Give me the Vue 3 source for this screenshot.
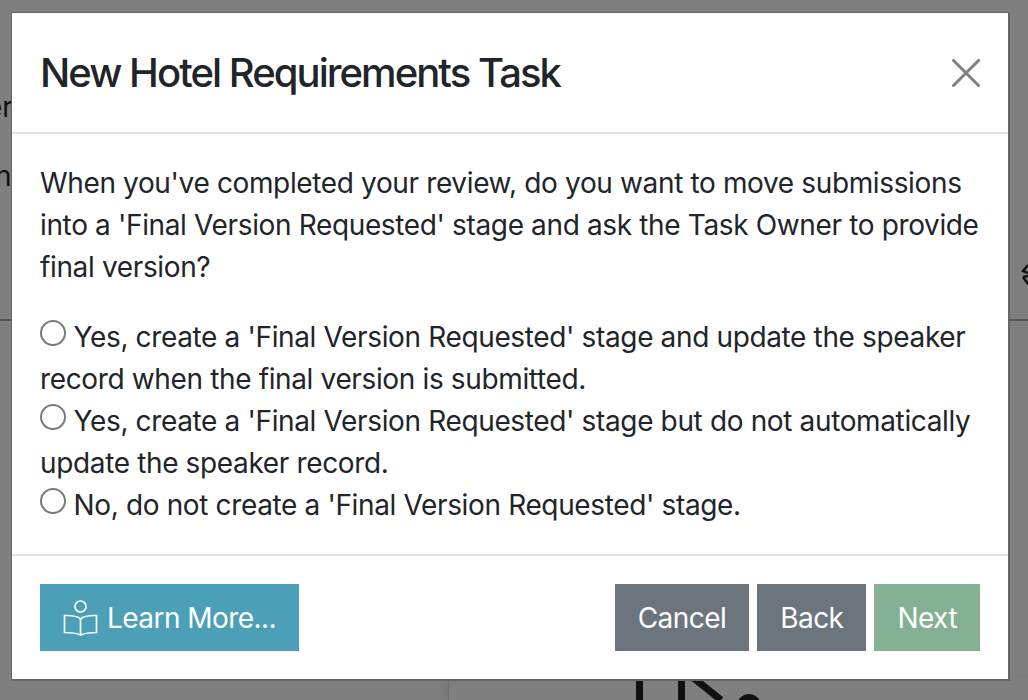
<template>
  <div class="page">
    <!-- dimmed page behind the modal -->
    <div class="backdrop">
      <span class="bg-text bg-er">er</span>
      <span class="bg-text bg-h">h</span>
      <svg class="bg-chevrons" width="8" height="24" viewBox="0 0 8 24" fill="none" stroke="#111" stroke-width="2.500">
        <path d="M7 1L2 7L7 9" />
        <path d="M2 13L7 20" />
        <path d="M2 13L7 12" />
      </svg>
      <div class="bg-line"></div>
      <div class="bg-card">
        <svg class="bg-icon" width="140" height="22" viewBox="0 0 140 22" fill="none" stroke="#111" stroke-width="7">
          <path d="M3.500 0V22" />
          <path d="M45.500 0V22" />
          <path d="M55 -2L85 22" />
          <circle cx="113" cy="28" r="12" fill="#111" stroke="none" />
        </svg>
      </div>
    </div>

    <div class="modal">
      <header class="modal-header">
        <h5 class="modal-title">New Hotel Requirements Task</h5>
        <button class="close" aria-label="Close">
          <svg width="28" height="28" viewBox="0 0 28 28" fill="none" stroke="#808080" stroke-width="3" stroke-linecap="round">
            <path d="M1.500 1.500L26.500 26.500M26.500 1.500L1.500 26.500" />
          </svg>
        </button>
      </header>

      <div class="modal-body">
        <p class="question">
          When you've completed your review, do you want to move submissions into a 'Final Version Requested' stage and ask the Task Owner to provide final version?
        </p>
        <div class="options">
          <div v-for="opt in options" :key="opt" class="option">
            <span class="radio"></span> {{ opt }}
          </div>
        </div>
      </div>

      <footer class="modal-footer">
        <button class="btn btn-info">
          <svg class="book" width="36" height="36" viewBox="0 0 36 36" fill="none" stroke="#fff" stroke-width="1.700" stroke-linejoin="round" stroke-linecap="round">
            <circle cx="17.500" cy="6.500" r="5.500" />
            <path d="M17.500 19C15 16.500 9 15.500 3.500 15.500H1.500V32.500C8 32.500 13 33 17.500 35C22 33 27 32.500 33.500 32.500V15.500H31.500C26 15.500 20 16.500 17.500 19Z" />
            <path d="M17.500 19V35" />
          </svg>
          Learn More...
        </button>
        <div class="actions">
          <button class="btn btn-secondary">Cancel</button>
          <button class="btn btn-secondary">Back</button>
          <button class="btn btn-success">Next</button>
        </div>
      </footer>
    </div>
  </div>
</template>

<script setup>
const options = [
  "Yes, create a 'Final Version Requested' stage and update the speaker record when the final version is submitted.",
  "Yes, create a 'Final Version Requested' stage but do not automatically update the speaker record.",
  "No, do not create a 'Final Version Requested' stage.",
]
</script>

<style>
html,
body {
  margin: 0;
  background: #7f7f7f;
}
</style>

<style scoped>
.page {
  position: relative;
  width: 1028px;
  height: 700px;
  overflow: hidden;
  padding: 12px 0 0 11px;
  box-sizing: border-box;
  background: #7f7f7f;
  font-family: Inter, "Liberation Sans", sans-serif;
  color: #212529;
}

.backdrop {
  position: absolute;
  inset: 0;
}

.bg-text {
  position: absolute;
  font-size: 28px;
  line-height: 42px;
  color: #111;
}

.bg-er {
  left: -14px;
  top: 86px;
}

.bg-h {
  left: -5px;
  top: 155px;
}

.bg-chevrons {
  position: absolute;
  left: 1021px;
  top: 264px;
}

.bg-line {
  position: absolute;
  left: 0;
  right: 0;
  top: 319px;
  height: 2px;
  background: #555;
}

.bg-card {
  position: absolute;
  left: 448px;
  top: 678px;
  width: 600px;
  height: 22px;
  border-left: 1px solid #6c6c6c;
  box-shadow: -6px 0 6px rgba(0, 0, 0, 0.05);
}

.bg-icon {
  position: absolute;
  left: 187px;
  top: 0;
}

.modal {
  position: relative;
  width: 998px;
  height: 668px;
  box-sizing: border-box;
  border: 1px solid #666;
  box-shadow: 1px 1px 0 #666;
  background: #fff;
  display: flex;
  flex-direction: column;
}

.modal-header {
  display: flex;
  align-items: center;
  justify-content: space-between;
  height: 121px;
  box-sizing: border-box;
  padding: 0 28px;
  border-bottom: 2px solid #dee2e6;
}

.modal-title {
  margin: 1px 0 0;
  font-size: 40px;
  line-height: 60px;
  font-weight: 500;
  letter-spacing: -1.95px;
}

.close {
  display: flex;
  padding: 0;
  border: none;
  background: none;
}

.modal-body {
  flex: 1;
  padding: 28px;
  font-size: 28px;
  line-height: 42px;
  letter-spacing: -0.36px;
}

.question {
  margin: 0 0 28px;
}

.radio {
  display: inline-block;
  width: 26px;
  height: 26px;
  box-sizing: border-box;
  border: 2px solid #7a7a7a;
  border-radius: 50%;
  background: #fff;
  vertical-align: 1px;
}

.modal-footer {
  display: flex;
  justify-content: space-between;
  align-items: center;
  height: 125px;
  box-sizing: border-box;
  padding: 0 28px;
  border-top: 2px solid #dee2e6;
}

.actions {
  display: flex;
  gap: 8px;
}

.btn {
  display: flex;
  align-items: center;
  gap: 8px;
  height: 67px;
  box-sizing: border-box;
  padding: 0 23px;
  border: none;
  color: #fff;
  font-family: inherit;
  font-size: 28px;
  letter-spacing: -0.55px;
}

.btn-info {
  background: #4b9fb6;
}

.btn-secondary {
  background: #6c757d;
}

.btn-success {
  background: #84b093;
}
</style>
